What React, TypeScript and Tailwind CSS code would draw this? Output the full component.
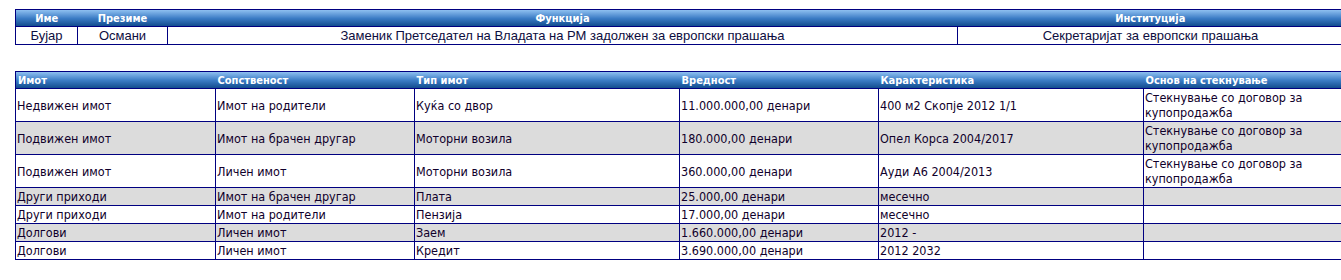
import React from 'react'

const head = 'bg-linear-to-b from-[#8ec0f0] via-[#3a7bc4] to-[#0b4788] text-white font-bold'

const person = { ime: 'Бујар', prezime: 'Османи', funkcija: 'Заменик Претседател на Владата на РМ задолжен за европски прашања', institucija: 'Секретаријат за европски прашања' }

const imot = [
  ['Недвижен имот', 'Имот на родители', 'Куќа со двор', '11.000.000,00 денари', '400 м2 Скопје 2012 1/1', 'Стекнување со договор за купопродажба'],
  ['Подвижен имот', 'Имот на брачен другар', 'Моторни возила', '180.000,00 денари', 'Опел Корса 2004/2017', 'Стекнување со договор за купопродажба'],
  ['Подвижен имот', 'Личен имот', 'Моторни возила', '360.000,00 денари', 'Ауди А6 2004/2013', 'Стекнување со договор за купопродажба'],
  ['Други приходи', 'Имот на брачен другар', 'Плата', '25.000,00 денари', 'месечно', ''],
  ['Други приходи', 'Имот на родители', 'Пензија', '17.000,00 денари', 'месечно', ''],
  ['Долгови', 'Личен имот', 'Заем', '1.660.000,00 денари', '2012 -', ''],
  ['Долгови', 'Личен имот', 'Кредит', '3.690.000,00 денари', '2012 2032', ''],
]

const cols = ['Имот', 'Сопственост', 'Тип имот', 'Вредност', 'Карактеристика', 'Основ на стекнување']
const widths = ['w-[200px]', 'w-[199px]', 'w-[265px]', 'w-[199px]', 'w-[265px]', 'w-[200px]']

export default function App() {
  return (
    <div className="w-[1341px] h-[280px] overflow-hidden bg-white pt-[9px] pl-[15px]">
      {/* лични податоци */}
      <table className="table-fixed border-collapse w-[1328px] border border-[#000080] font-['Liberation_Sans',Arial,sans-serif] text-[13px] text-[#0d0d40]">
        <colgroup>
          <col className="w-[62px]" />
          <col className="w-[90px]" />
          <col className="w-[790px]" />
          <col className="w-[386px]" />
        </colgroup>
        <thead>
          <tr className={head + " h-[17px] text-[11px] leading-[15px] font-['DejaVu_Sans_Condensed','DejaVu_Sans',sans-serif]"}>
            <th className="p-0 text-center">Име</th>
            <th className="p-0 text-center">Презиме</th>
            <th className="p-0 text-center">Функција</th>
            <th className="p-0 text-center">Институција</th>
          </tr>
        </thead>
        <tbody>
          <tr className="h-[18px] leading-[16px]">
            <td className="border border-[#000080] p-0 text-center">{person.ime}</td>
            <td className="border border-[#000080] p-0 text-center">{person.prezime}</td>
            <td className="border border-[#000080] p-0 text-center">{person.funkcija}</td>
            <td className="border border-[#000080] p-0 text-center">{person.institucija}</td>
          </tr>
        </tbody>
      </table>

      {/* имот */}
      <table className="mt-[26px] table-fixed border-collapse w-[1328px] border border-[#000080] font-['DejaVu_Sans_Condensed','DejaVu_Sans',sans-serif] text-[12.5px] text-[#10002b]">
        <colgroup>
          {widths.map((w, i) => (
            <col key={i} className={w} />
          ))}
        </colgroup>
        <thead>
          <tr className={head + ' h-[17px] text-[11px] leading-[15px]'}>
            {cols.map((c) => (
              <th key={c} className="p-0 pl-[2px] text-left">{c}</th>
            ))}
          </tr>
        </thead>
        <tbody>
          {imot.map((r, i) => (
            <tr key={i} className={i % 2 === 1 ? 'bg-[#dcdcdc]' : 'bg-white'}>
              {r.map((c, j) => (
                <td key={j} className="border border-[#000080] px-[1px] py-px leading-[15px] align-middle">
                  {c || '\u00a0'}
                </td>
              ))}
            </tr>
          ))}
        </tbody>
      </table>

      <div className="mt-[20px] ml-[2px] w-[9px] h-[2px] bg-[#e6e6e6]" />
    </div>
  )
}
